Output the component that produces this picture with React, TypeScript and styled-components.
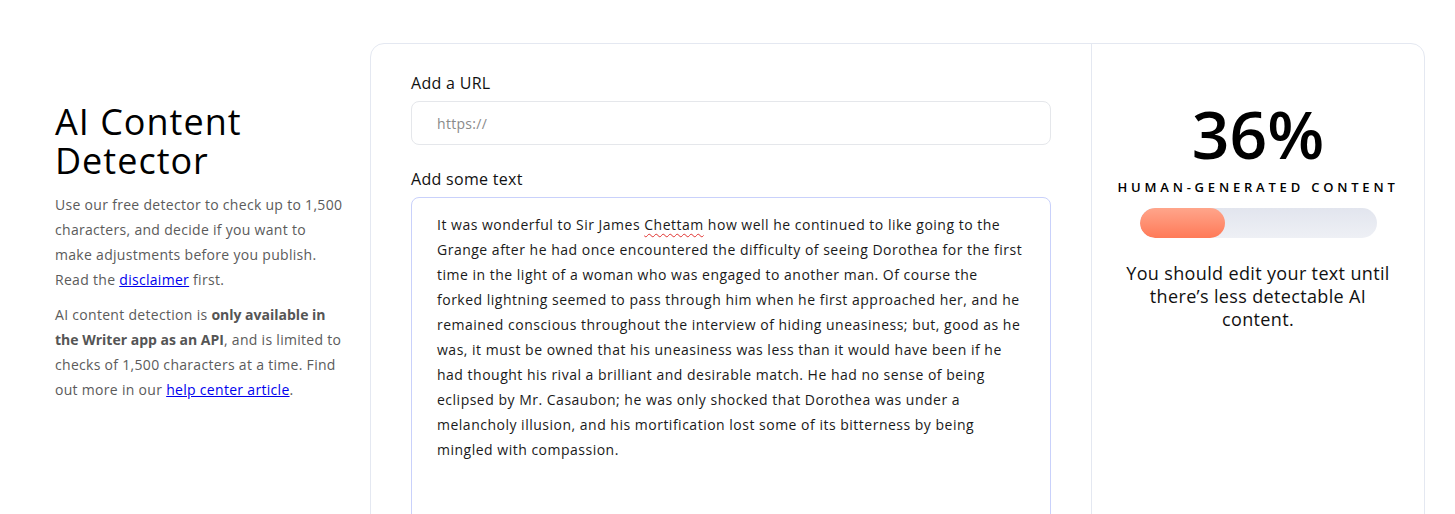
import React from "react";
import styled, { createGlobalStyle } from "styled-components";

const Global = createGlobalStyle`
  html, body { margin: 0; padding: 0; background: #fff; }
  body { font-family: "Open Sans", "Noto Sans", sans-serif; color: #111; }
  * { box-sizing: border-box; }
`;

const Page = styled.div`
  display: flex;
  align-items: flex-start;
  gap: 25px;
  padding: 43px 30px 0 55px;
  height: 514px;
  overflow: hidden;
`;

const Intro = styled.div`
  width: 290px;
  flex: none;
  padding-top: 59px;
`;

const Title = styled.h1`
  margin: 0 0 12px;
  font-size: 36px;
  line-height: 39px;
  font-weight: 400;
  color: #000;
  letter-spacing: 1px;
`;

const Para = styled.p`
  margin: 0 0 10px;
  font-size: 14px;
  line-height: 25px;
  color: #5b5b5b;
  letter-spacing: 0.3px;
  b { font-weight: 700; color: #555; letter-spacing: 0; }
  a { color: #0000ee; text-decoration: underline; }
`;

const Card = styled.div`
  flex: 1;
  display: flex;
  height: 520px;
  border: 1px solid #e4e8f1;
  border-radius: 14px;
`;

const Form = styled.div`
  flex: 1;
  padding: 28px 40px 0 40px;
  border-right: 1px solid #e4e8f1;
  display: flex;
  flex-direction: column;
`;

const Label = styled.label`
  display: block;
  font-size: 16px;
  font-weight: 500;
  color: #111;
  line-height: 22px;
  letter-spacing: 0.3px;
  margin-bottom: 7px;
`;

const UrlInput = styled.div`
  height: 44px;
  border: 1px solid #e5e7eb;
  border-radius: 8px;
  padding: 0 25px;
  display: flex;
  align-items: center;
  font-size: 14px;
  letter-spacing: 0.3px;
  color: #8a8a8a;
  margin-bottom: 23px;
`;

const TextBox = styled.div`
  flex: 1;
  border: 1px solid #c9d1fb;
  border-radius: 8px;
  padding: 14px 25px;
  font-size: 14px;
  line-height: 25px;
  letter-spacing: 0.5px;
  color: #1a1a1a;
`;

const Misspelled = styled.span`
  text-decoration: underline wavy #e0322f;
  text-decoration-thickness: 1px;
  text-underline-offset: 3px;
`;

const Result = styled.div`
  width: 332px;
  flex: none;
  display: flex;
  flex-direction: column;
  align-items: center;
  padding-top: 53px;
  text-align: center;
`;

const Score = styled.div`
  font-size: 66px;
  line-height: 72px;
  font-weight: 600;
  color: #000;
`;

const ScoreLabel = styled.div`
  margin-top: 9px;
  font-size: 13px;
  font-weight: 600;
  letter-spacing: 3.8px;
  color: #000;
`;

const Track = styled.div`
  margin-top: 12px;
  width: 237px;
  height: 30px;
  border-radius: 15px;
  background: linear-gradient(#e2e5ee, #eef0f5);
  overflow: hidden;
`;

const Fill = styled.div`
  height: 100%;
  border-radius: 15px;
  background: linear-gradient(#ffa58b, #ff7a58);
`;

const Advice = styled.p`
  margin: 24px 0 0;
  width: 290px;
  font-size: 18px;
  line-height: 23px;
  letter-spacing: 0.35px;
  color: #111;
`;

export default function App() {
  const score = 36;
  return (
    <>
      <Global />
      <Page>
        <Intro>
          <Title>AI Content Detector</Title>
          <Para>
            Use our free detector to check up to 1,500 characters, and decide if you want to
            make adjustments before you publish. Read the <a href="#">disclaimer</a> first.
          </Para>
          <Para>
            AI content detection is <b>only available in the Writer app as an API</b>, and is
            limited to checks of 1,500 characters at a time. Find out more in our{" "}
            <a href="#">help center article</a>.
          </Para>
        </Intro>
        <Card>
          <Form>
            <Label>Add a URL</Label>
            <UrlInput>https://</UrlInput>
            <Label>Add some text</Label>
            <TextBox>
              It was wonderful to Sir James <Misspelled>Chettam</Misspelled> how well he
              continued to like going to the Grange after he had once encountered the difficulty
              of seeing Dorothea for the first time in the light of a woman who was engaged to
              another man. Of course the forked lightning seemed to pass through him when he first
              approached her, and he remained conscious throughout the interview of hiding
              uneasiness; but, good as he was, it must be owned that his uneasiness was less than
              it would have been if he had thought his rival a brilliant and desirable match. He
              had no sense of being eclipsed by Mr. Casaubon; he was only shocked that Dorothea
              was under a melancholy illusion, and his mortification lost some of its bitterness
              by being mingled with compassion.
            </TextBox>
          </Form>
          <Result>
            <Score>{score}%</Score>
            <ScoreLabel>HUMAN-GENERATED CONTENT</ScoreLabel>
            <Track>
              <Fill style={{ width: `${score}%` }} />
            </Track>
            <Advice>You should edit your text until there’s less detectable AI content.</Advice>
          </Result>
        </Card>
      </Page>
    </>
  );
}
